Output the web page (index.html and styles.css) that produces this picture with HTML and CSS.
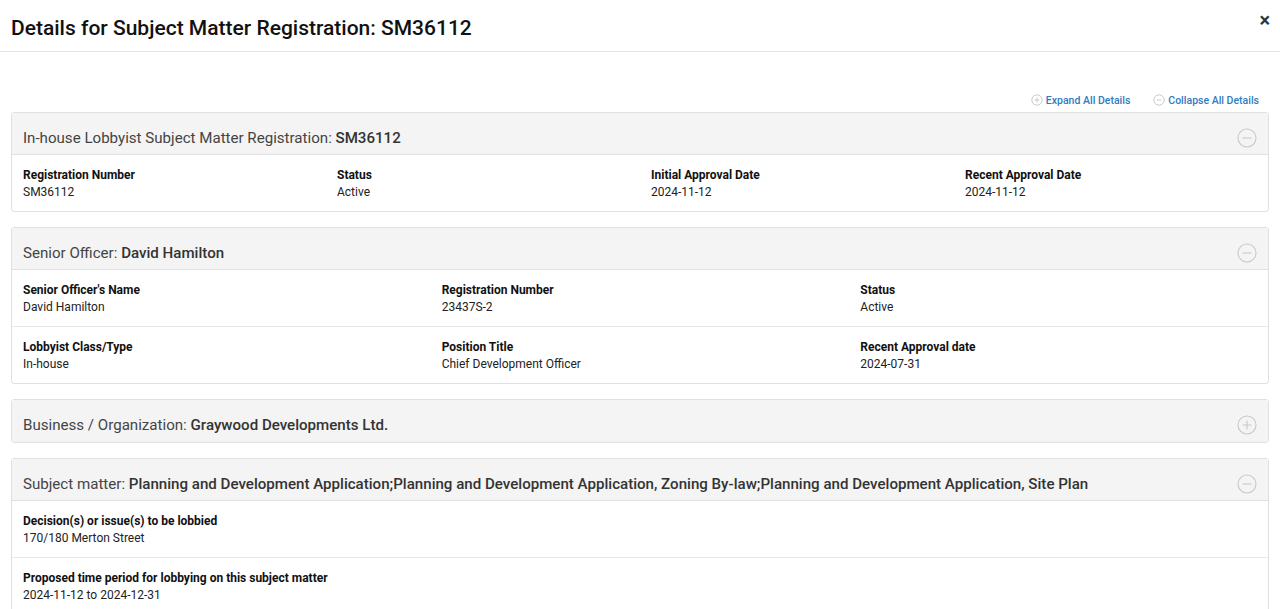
FILE: index.html
```html
<!DOCTYPE html>
<html lang="en">
<head>
    <meta charset="UTF-8">
    <title>Details for Subject Matter Registration: SM36112</title>
    <link rel="stylesheet" href="styles.css">
</head>
<body>
    <div class="modal">
        <div class="modal-header">
            <h1>Details for Subject Matter Registration: SM36112</h1>
            <span class="close">&times;</span>
        </div>
        <div class="modal-body">
            <div class="toolbar">
                <a href="#" class="tool-link">
                    <svg class="mini-icon" viewBox="0 0 12 12"><circle cx="6" cy="6" r="5.2"/><path d="M3.6 6h4.8M6 3.6v4.8"/></svg>
                    Expand All Details
                </a>
                <a href="#" class="tool-link">
                    <svg class="mini-icon" viewBox="0 0 12 12"><circle cx="6" cy="6" r="5.2"/><path d="M3.6 6h4.8"/></svg>
                    Collapse All Details
                </a>
            </div>

            <div class="panel">
                <div class="panel-heading">
                    <span>In-house Lobbyist Subject Matter Registration: <b>SM36112</b></span>
                    <svg class="toggle" viewBox="0 0 20 20"><circle cx="10" cy="10" r="9"/><path d="M5.5 10h9"/></svg>
                </div>
                <div class="row cols-4">
                    <div class="field"><div class="label">Registration Number</div><div class="value">SM36112</div></div>
                    <div class="field"><div class="label">Status</div><div class="value">Active</div></div>
                    <div class="field"><div class="label">Initial Approval Date</div><div class="value">2024-11-12</div></div>
                    <div class="field"><div class="label">Recent Approval Date</div><div class="value">2024-11-12</div></div>
                </div>
            </div>

            <div class="panel">
                <div class="panel-heading">
                    <span>Senior Officer: <b>David Hamilton</b></span>
                    <svg class="toggle" viewBox="0 0 20 20"><circle cx="10" cy="10" r="9"/><path d="M5.5 10h9"/></svg>
                </div>
                <div class="row cols-3">
                    <div class="field"><div class="label">Senior Officer's Name</div><div class="value">David Hamilton</div></div>
                    <div class="field"><div class="label">Registration Number</div><div class="value">23437S-2</div></div>
                    <div class="field"><div class="label">Status</div><div class="value">Active</div></div>
                </div>
                <div class="row cols-3">
                    <div class="field"><div class="label">Lobbyist Class/Type</div><div class="value">In-house</div></div>
                    <div class="field"><div class="label">Position Title</div><div class="value">Chief Development Officer</div></div>
                    <div class="field"><div class="label">Recent Approval date</div><div class="value">2024-07-31</div></div>
                </div>
            </div>

            <div class="panel">
                <div class="panel-heading collapsed">
                    <span>Business / Organization: <b>Graywood Developments Ltd.</b></span>
                    <svg class="toggle" viewBox="0 0 20 20"><circle cx="10" cy="10" r="9"/><path d="M5.5 10h9M10 5.5v9"/></svg>
                </div>
            </div>

            <div class="panel">
                <div class="panel-heading">
                    <span>Subject matter: <b>Planning and Development Application;Planning and Development Application, Zoning By-law;Planning and Development Application, Site Plan</b></span>
                    <svg class="toggle" viewBox="0 0 20 20"><circle cx="10" cy="10" r="9"/><path d="M5.5 10h9"/></svg>
                </div>
                <div class="row">
                    <div class="field"><div class="label">Decision(s) or issue(s) to be lobbied</div><div class="value">170/180 Merton Street</div></div>
                </div>
                <div class="row">
                    <div class="field"><div class="label">Proposed time period for lobbying on this subject matter</div><div class="value">2024-11-12 to 2024-12-31</div></div>
                </div>
            </div>
        </div>
    </div>
</body>
</html>
```

FILE: styles.css
```css
body {
    margin: 0;
    font-family: Roboto, "Liberation Sans", sans-serif;
    color: #222;
    background: #fff;
}
.modal-header {
    display: flex;
    justify-content: space-between;
    align-items: flex-start;
    height: 52px;
    padding: 0 11px;
    border-bottom: 1px solid #e5e5e5;
    box-sizing: border-box;
}
.modal-header h1 {
    margin: 15px 0 0;
    font-size: 21px;
    font-weight: 500;
    line-height: 26px;
    color: #111;
}
.close {
    margin-top: 8px;
    margin-right: -1px;
    font-size: 20px;
    font-weight: bold;
    color: #333;
    line-height: 24px;
}
.modal-body {
    padding: 38px 11px 0;
}
.toolbar {
    display: flex;
    justify-content: flex-end;
    gap: 23px;
    padding-right: 10px;
    height: 22px;
}
.tool-link {
    display: flex;
    align-items: center;
    gap: 3px;
    height: 20px;
    font-size: 10.5px;
    font-weight: 500;
    color: #2f7bbf;
    text-decoration: none;
}
.mini-icon {
    width: 12px;
    height: 12px;
    fill: none;
    stroke: #c4c4c4;
    stroke-width: 0.9;
}
.panel {
    border: 1px solid #e0e0e0;
    border-radius: 3px;
    margin-bottom: 15px;
    background: #fff;
}
.panel-heading {
    display: flex;
    justify-content: space-between;
    align-items: center;
    height: 42px;
    padding: 8px 11px 0;
    box-sizing: border-box;
    background: #f4f4f4;
    border-bottom: 1px solid #e0e0e0;
    font-size: 15.1px;
    color: #444;
}
.panel-heading.collapsed {
    border-bottom: none;
    height: 42px;
}
.panel-heading b {
    font-weight: 500;
    color: #333;
}
.toggle {
    width: 20px;
    height: 20px;
    fill: none;
    stroke: #c8c8c8;
    stroke-width: 1.1;
}
.row {
    display: grid;
    grid-template-columns: 1fr;
    border-bottom: 1px solid #e8e8e8;
}
.row:last-child {
    border-bottom: none;
}
.cols-4 {
    grid-template-columns: repeat(4, 1fr);
}
.cols-3 {
    grid-template-columns: repeat(3, 1fr);
}
.field {
    padding: 12px 11px;
    height: 32px;
}
.label {
    font-size: 12px;
    font-weight: 700;
    line-height: 17px;
    color: #111;
}
.value {
    font-size: 12px;
    line-height: 17px;
    color: #222;
}
```
